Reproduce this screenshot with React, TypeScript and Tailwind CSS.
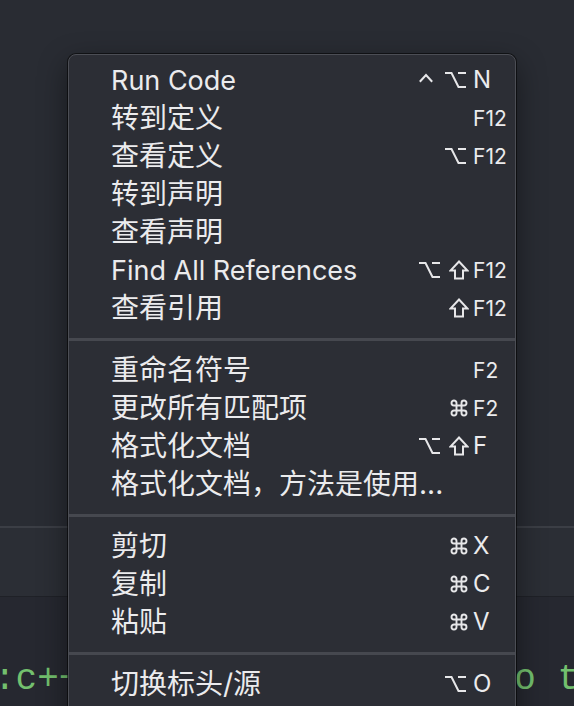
import React from "react";

type Mod = "ctrl" | "opt" | "shift" | "cmd";

type Item = {
  label: string;
  mods?: Mod[];
  key?: string;
  keySize?: "sm" | "lg";
};

type Entry = Item | "sep";

const entries: Entry[] = [
  { label: "Run Code", mods: ["ctrl", "opt"], key: "N", keySize: "lg" },
  { label: "转到定义", key: "F12", keySize: "sm" },
  { label: "查看定义", mods: ["opt"], key: "F12", keySize: "sm" },
  { label: "转到声明" },
  { label: "查看声明" },
  { label: "Find All References", mods: ["opt", "shift"], key: "F12", keySize: "sm" },
  { label: "查看引用", mods: ["shift"], key: "F12", keySize: "sm" },
  "sep",
  { label: "重命名符号", key: "F2", keySize: "sm" },
  { label: "更改所有匹配项", mods: ["cmd"], key: "F2", keySize: "sm" },
  { label: "格式化文档", mods: ["opt", "shift"], key: "F", keySize: "lg" },
  { label: "格式化文档，方法是使用..." },
  "sep",
  { label: "剪切", mods: ["cmd"], key: "X", keySize: "lg" },
  { label: "复制", mods: ["cmd"], key: "C", keySize: "lg" },
  { label: "粘贴", mods: ["cmd"], key: "V", keySize: "lg" },
  "sep",
  { label: "切换标头/源", mods: ["opt"], key: "O", keySize: "lg" },
];

function ModIcon({ m }: { m: Mod }) {
  const stroke = "#e7e7e9";
  if (m === "ctrl")
    return (
      <svg width="14" height="18" viewBox="0 0 14 18" className="mr-[6px]">
        <path d="M1.5 10 L7 4 L12.5 10" fill="none" stroke={stroke} strokeWidth="2" strokeLinecap="square" strokeLinejoin="miter" />
      </svg>
    );
  if (m === "opt")
    return (
      <svg width="24" height="18" viewBox="0 0 24 18">
        <path d="M0 2 H6.5 L13.5 16 H21 M13 2 H21" fill="none" stroke={stroke} strokeWidth="2" strokeLinejoin="miter" />
      </svg>
    );
  if (m === "shift")
    return (
      <svg width="20" height="20" viewBox="0 0 20 20">
        <path d="M10 1.5 L18.5 10.5 H14 V18.5 H6 V10.5 H1.5 Z" fill="none" stroke={stroke} strokeWidth="2" strokeLinejoin="miter" />
      </svg>
    );
  return (
    <svg width="20" height="20" viewBox="0 0 24 24">
      <path
        d="M15 6v12a3 3 0 1 0 3-3H6a3 3 0 1 0 3 3V6a3 3 0 1 0-3 3h12a3 3 0 1 0-3-3"
        fill="none"
        stroke={stroke}
        strokeWidth="2.3"
        strokeLinecap="round"
        strokeLinejoin="round"
      />
    </svg>
  );
}

const isCJK = (s: string) => /[\u3000-\u9fff\uff00-\uffef]/.test(s);

function Row({ item }: { item: Item }) {
  return (
    <div className="flex h-[38px] items-center pl-[42px] text-[#ebebed]">
      <span
        className={
          isCJK(item.label)
            ? "flex-1 whitespace-nowrap font-['Inter','Noto_Sans_CJK_SC',sans-serif] text-[28px] leading-none"
            : "flex-1 whitespace-nowrap font-['Inter','Noto_Sans_CJK_SC',sans-serif] text-[27px] leading-none"
        }
      >
        {item.label}
      </span>
      {item.key && (
        <div className="flex items-center">
          <div className="flex w-[100px] items-center justify-end gap-[6px] pr-[4px]">
            {(item.mods || []).map((m, i) => (
              <ModIcon key={i} m={m} />
            ))}
          </div>
          <span
            className={
              item.keySize === "lg"
                ? "w-[42px] font-['Inter',sans-serif] text-[24px] leading-none"
                : "w-[42px] font-['Inter',sans-serif] text-[21px] leading-none"
            }
          >
            {item.key}
          </span>
        </div>
      )}
    </div>
  );
}

export default function App() {
  return (
    <div className="relative h-[706px] w-[574px] overflow-hidden bg-[#282a31]">
      <div className="h-[526px] bg-[#292c33]" />
      <div className="h-[2px] bg-[#3b3e45]" />
      <div className="h-[68px] bg-[#2b2e35]" />
      <div className="h-[1px] bg-[#1f2127]" />
      <div className="flex h-[109px] items-end bg-[#262830] pb-[8px]">
        <div className="flex w-full font-['Liberation_Mono',monospace] text-[36px] leading-none text-[#73c06e]">
          <span className="ml-[-6px] whitespace-pre">:c++</span>
          <span className="ml-auto mr-[-5px] whitespace-pre">o t</span>
        </div>
      </div>

      <div className="absolute left-[68px] top-[54px] h-[680px] w-[448px] rounded-[8px] border border-[#4c4e55] bg-[#2c2e35] pt-[6px] shadow-[0_0_0_1px_rgba(0,0,0,0.55),0_10px_30px_rgba(0,0,0,0.45)]">
        {entries.map((e, i) =>
          e === "sep" ? (
            <div key={i} className="flex h-[24px] items-center">
              <div className="h-[3px] w-full bg-[#46484f]" />
            </div>
          ) : (
            <Row key={i} item={e} />
          )
        )}
      </div>
    </div>
  );
}
